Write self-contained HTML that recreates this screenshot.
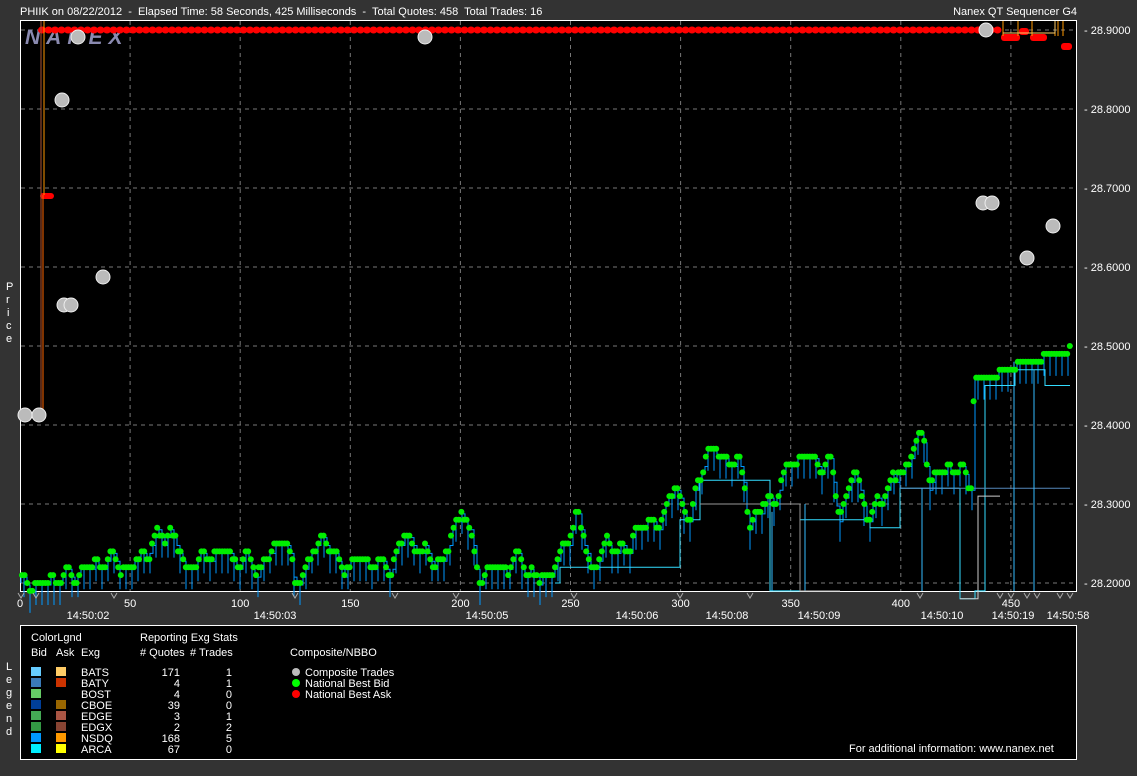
<!DOCTYPE html>
<html><head><meta charset="utf-8"><style>
body{margin:0;background:#333;width:1137px;height:776px;overflow:hidden;font-family:"Liberation Sans",sans-serif;}
svg{position:absolute;left:0;top:0}
text{font-family:"Liberation Sans",sans-serif;font-size:11px;fill:#fff;white-space:pre}
</style></head><body>
<svg id="s" width="1137" height="776" xmlns="http://www.w3.org/2000/svg" xml:space="preserve">
<rect x="0" y="0" width="1137" height="776" fill="#333"/>
<text x="20" y="15">PHIIK on 08/22/2012  -  Elapsed Time: 58 Seconds, 425 Milliseconds  -  Total Quotes: 458  Total Trades: 16</text>
<text x="1077" y="15" text-anchor="end">Nanex QT Sequencer G4</text>
<rect x="20.5" y="20.5" width="1056" height="571" fill="#000" stroke="#fff" stroke-width="1"/>
<g id="grid" stroke="#777" stroke-dasharray="4,4" stroke-width="1"></g>
<text x="25" y="44" style="font-size:21px;font-style:italic;letter-spacing:6px;fill:#8a8ab0;font-weight:bold">NANEX</text>
<g id="plot"></g>
<g id="axis"></g>
<g font-size="11">
<text x="6" y="290">P</text><text x="6" y="303">r</text><text x="7" y="316">i</text><text x="6" y="329">c</text><text x="6" y="342">e</text>
<text x="6" y="670">L</text><text x="6" y="683">e</text><text x="6" y="696">g</text><text x="6" y="709">e</text><text x="6" y="722">n</text><text x="6" y="735">d</text>
</g>
<rect x="20.5" y="625.5" width="1056" height="134" fill="#000" stroke="#fff"/>
<g id="leg"></g>
<text x="31" y="641">ColorLgnd</text>
<text x="31" y="656">Bid</text><text x="56" y="656">Ask</text><text x="81" y="656">Exg</text>
<text x="140" y="641">Reporting Exg Stats</text>
<text x="140" y="656"># Quotes</text><text x="190" y="656"># Trades</text>
<text x="290" y="656">Composite/NBBO</text>
<circle cx="296" cy="672" r="4" fill="#bbb"/><text x="305" y="676">Composite Trades</text>
<circle cx="296" cy="683" r="4" fill="#0f0"/><text x="305" y="687">National Best Bid</text>
<circle cx="296" cy="694" r="4" fill="#f00"/><text x="305" y="698">National Best Ask</text>
<text x="849" y="752">For additional information: www.nanex.net</text>
</svg>
<script>
var NS="http://www.w3.org/2000/svg";
function el(p,t,a,tx){var e=document.createElementNS(NS,t);for(var k in a)e.setAttribute(k,a[k]);if(tx)e.textContent=tx;document.getElementById(p).appendChild(e);return e;}
function Y(p){return 30+(28.9-p)*790;}
var g="grid",ax="axis";
for(var i=0;i<8;i++){var y=Y(28.9-i*0.1);el(g,"line",{x1:21,x2:1076,y1:y,y2:y});
el(ax,"text",{x:1084,y:y+4},"- "+(28.9-i*0.1).toFixed(4));}
for(var i=1;i<10;i++){var x=20+i*110.1;el(g,"line",{x1:x,x2:x,y1:21,y2:591});}
for(var i=0;i<10;i++){var x=20+i*110.1;el(ax,"text",{x:x,y:607,"text-anchor":"middle"},String(i*50));}
var tl=[[88,"14:50:02"],[275,"14:50:03"],[487,"14:50:05"],[637,"14:50:06"],[727,"14:50:08"],[819,"14:50:09"],[942,"14:50:10"],[1013,"14:50:19"],[1068,"14:50:58"]];
tl.forEach(function(t){el(ax,"text",{x:t[0],y:619,"text-anchor":"middle"},t[1]);});
var rows=[["BATS","#66ccff","#ffcc66",171,1],["BATY","#3a7ab8","#cc3300",4,1],["BOST","#66cc66",null,4,0],["CBOE","#003f99","#996600",39,0],["EDGE","#44aa55","#aa5544",3,1],["EDGX","#339944","#884433",2,2],["NSDQ","#0099ff","#ff9900",168,5],["ARCA","#00eeff","#ffff00",67,0]];
rows.forEach(function(r,i){var y=667+i*11;el("leg","rect",{x:31,y:y,width:10,height:9,fill:r[1]});if(r[2])el("leg","rect",{x:56,y:y,width:10,height:9,fill:r[2]});
el("leg","text",{x:81,y:y+9},r[0]);el("leg","text",{x:180,y:y+9,"text-anchor":"end"},String(r[3]));el("leg","text",{x:232,y:y+9,"text-anchor":"end"},String(r[4]));});
var P="plot";
var kp=[[21,28.20],[40,28.20],[70,28.21],[110,28.23],[130,28.22],[170,28.27],[185,28.22],[215,28.24],[240,28.23],[260,28.22],[285,28.26],[295,28.20],[325,28.26],[340,28.22],[360,28.23],[390,28.22],[405,28.26],[430,28.23],[445,28.23],[462,28.30],[480,28.21],[520,28.23],[540,28.20],[560,28.23],[578,28.29],[590,28.22],[610,28.25],[630,28.24],[640,28.28],[655,28.27],[675,28.32],[690,28.28],[707,28.37],[740,28.35],[750,28.28],[775,28.31],[795,28.36],[830,28.35],[840,28.29],[855,28.34],[870,28.28],[890,28.33],[905,28.34],[915,28.38],[925,28.38],[930,28.33],[962,28.35],[968,28.32],[972,28.32],[974,28.46],[995,28.46],[1000,28.47],[1015,28.47],[1018,28.48],[1040,28.48],[1045,28.49],[1066,28.49],[1070,28.50]];
function bid(x){for(var i=1;i<kp.length;i++){if(x<=kp[i][0]){var a=kp[i-1],b=kp[i];var t=(x-a[0])/(b[0]-a[0]);var v=a[1]+(b[1]-a[1])*t;if(x<970){v+=0.012*Math.sin(x*0.35)*Math.sin(x*0.07);}return Math.round(v*100)/100;}}return 28.5;}
var d1="M21 "+Y(28.2);
for(var x=21;x<1070;x+=3){var b=bid(x);d1+=" H"+x+" V"+(Y(b)+2);if(x%6==0)d1+=" V"+(Y(b)+22)+" V"+(Y(b)+2);}
el(P,"path",{d:d1,fill:"none",stroke:"#0099ff","stroke-width":1});
var cy=[[560,28.22],[670,28.22],[680,28.28],[700,28.33],[770,28.19],[800,28.28],[870,28.27],[900,28.32],[960,28.18],[975,28.19],[985,28.45],[1015,28.45],[1015,28.47],[1040,28.47],[1045,28.45],[1070,28.45]];
var d3="M555 "+Y(28.2);cy.forEach(function(c){d3+=" H"+c[0]+" V"+Y(c[1]);});
el(P,"path",{d:d3,fill:"none",stroke:"#33ddff","stroke-width":1});
el(P,"line",{x1:900,x2:1070,y1:Y(28.32),y2:Y(28.32),stroke:"#5588bb"});
[[1014,28.48],[1034,28.47],[772,28.29],[805,28.3],[922,28.32]].forEach(function(v){el(P,"line",{x1:v[0],x2:v[0],y1:Y(v[1]),y2:591,stroke:"#33bbff"});});
el(P,"path",{d:"M960 "+Y(28.18)+" H978 V"+Y(28.31)+" H1000",fill:"none",stroke:"#ccc"});
el(P,"path",{d:"M700 "+Y(28.3)+" H800 V"+Y(28.19)+" H840",fill:"none",stroke:"#999"});
for(var x=22;x<1071;x+=2.6){var b=bid(x);el(P,"ellipse",{cx:x,cy:Y(b),rx:3,ry:3,fill:"#00ee00"});}
for(var x=42;x<1000;x+=6.5){el(P,"ellipse",{cx:x,cy:30,rx:4,ry:3.5,fill:"#f00"});}
el(P,"rect",{x:40,y:193,width:14,height:6,rx:3,fill:"#f00"});
el(P,"line",{x1:41,x2:41,y1:21,y2:415,stroke:"#aa5533"});
el(P,"line",{x1:44,x2:44,y1:21,y2:195,stroke:"#ff9900"});
el(P,"line",{x1:43,x2:43,y1:195,y2:415,stroke:"#ff6600"});
[[1001,34,19],[1030,34,17],[1061,43,11],[1019,28,10]].forEach(function(r){el(P,"rect",{x:r[0],y:r[1],width:r[2],height:7,rx:3,fill:"#f00"});});
[1003,1018,1032,1055,1058,1063].forEach(function(x){el(P,"line",{x1:x,x2:x,y1:21,y2:36,stroke:"#ff9900"});});
el(P,"path",{d:"M1003 33 H1055 V21",fill:"none",stroke:"#ffcc66"});
[[25,415],[39,415],[78,37],[62,100],[64,305],[71,305],[103,277],[425,37],[986,30],[983,203],[992,203],[1027,258],[1053,226]].forEach(function(c){el(P,"circle",{cx:c[0],cy:c[1],r:7,fill:"#bbb",stroke:"#eee","stroke-width":1});});
[21,36,114,295,395,456,574,680,750,920,1000,1011,1027,1037,1060,1070].forEach(function(x){el(P,"path",{d:"M"+(x-3)+" 593 L"+x+" 598 L"+(x+3)+" 593",fill:"none",stroke:"#aaa"});});
</script>
</body></html>
